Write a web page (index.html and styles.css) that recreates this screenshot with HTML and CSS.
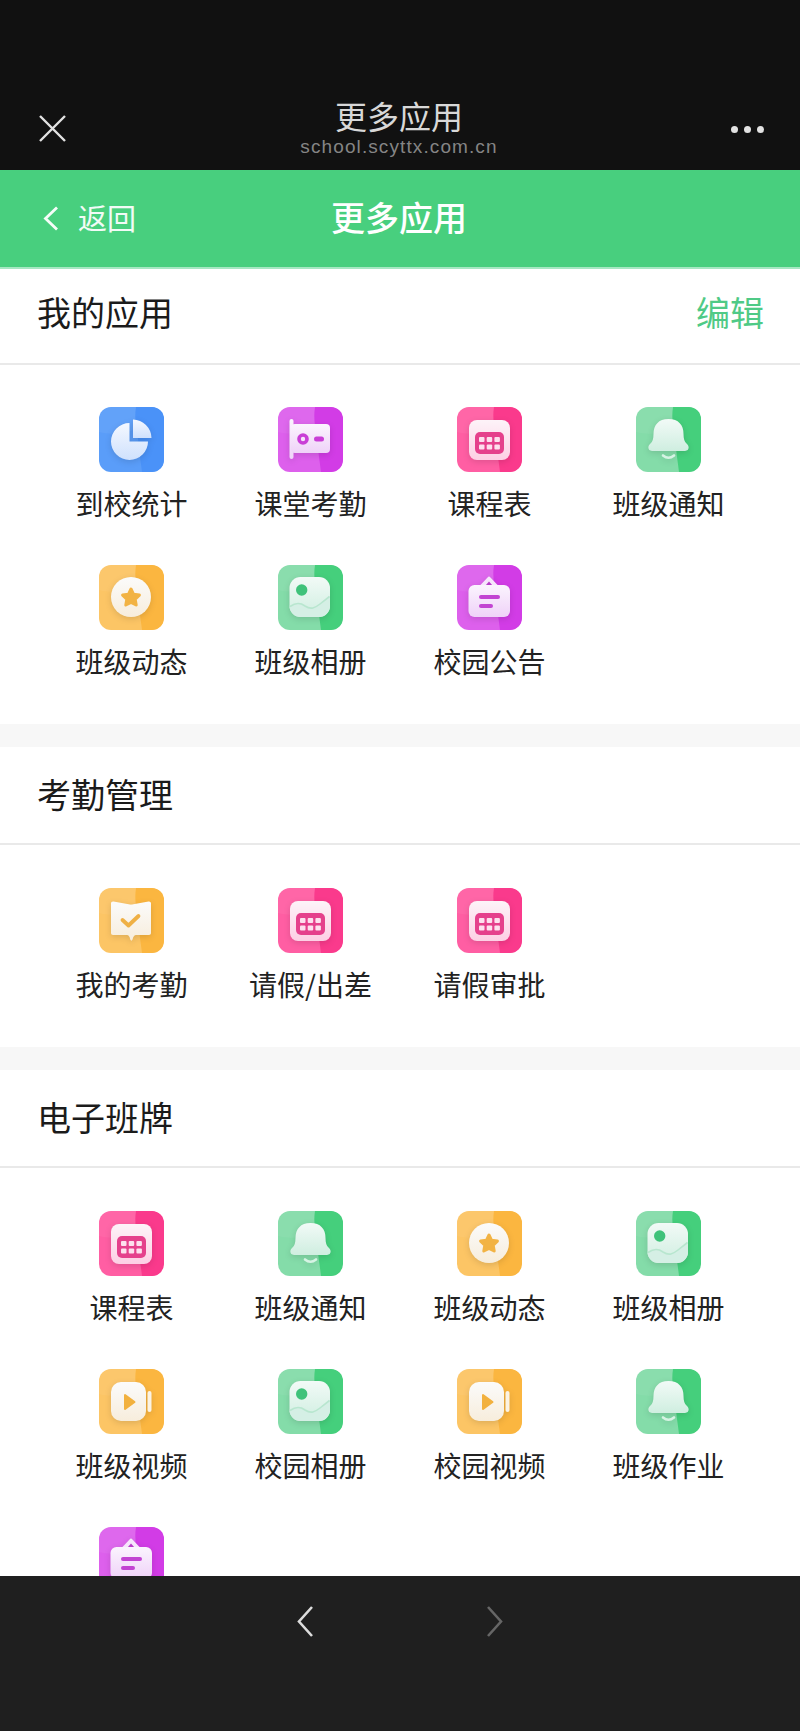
FILE: index.html
```html
<!DOCTYPE html>
<html lang="zh-CN">
<head>
    <meta charset="UTF-8">
    <meta name="viewport" content="width=device-width, initial-scale=1.0">
    <title>更多应用</title>
    <link rel="stylesheet" href="styles.css">
</head>
<body>
    <!-- shared icon parts -->
    <svg class="icon-defs" aria-hidden="true">
        <defs>
            <linearGradient id="fade-blue" x1="0" y1="0" x2="0" y2="1"><stop offset="0" stop-color="#f4f8ff"/><stop offset="1" stop-color="#cfe1fd"/></linearGradient>
            <linearGradient id="fade-purple" x1="0" y1="0" x2="0" y2="1"><stop offset="0" stop-color="#fbf4fe"/><stop offset="1" stop-color="#efd2f8"/></linearGradient>
            <linearGradient id="fade-pink" x1="0" y1="0" x2="0" y2="1"><stop offset="0" stop-color="#fdf3f8"/><stop offset="1" stop-color="#fdcfe4"/></linearGradient>
            <linearGradient id="fade-green" x1="0" y1="0" x2="0" y2="1"><stop offset="0" stop-color="#f2faf7"/><stop offset="1" stop-color="#cfeee0"/></linearGradient>
            <linearGradient id="fade-orange" x1="0" y1="0" x2="0" y2="1"><stop offset="0" stop-color="#fbfbfb"/><stop offset="1" stop-color="#f7eddc"/></linearGradient>

            <symbol id="tile" viewBox="0 0 65 65">
                <path class="tile-right" d="M37 0C35 12 38 22 39 32C40 44 42 56 43 65H53A12 12 0 0 0 65 53V12A12 12 0 0 0 53 0Z"/>
                <path class="tile-band" d="M12 0H37C36 8 36 15 37 22C25 27 11 28 0 25V12A12 12 0 0 1 12 0Z"/>
            </symbol>

            <symbol id="pie" viewBox="0 0 65 65">
                <path fill="url(#fade-blue)" d="M30.5 16A18.5 18.5 0 1 0 49 34.5H30.5Z"/>
                <path fill="url(#fade-blue)" d="M34 12.5A19 19 0 0 1 52.5 31H34Z"/>
            </symbol>
            <symbol id="card" viewBox="0 0 65 65">
                <rect x="11.5" y="12" width="4" height="40" rx="2" fill="url(#fade-purple)"/>
                <rect x="13" y="17" width="39" height="29" rx="4" fill="url(#fade-purple)"/>
                <circle cx="25" cy="32" r="4" fill="none" stroke="#c93ed6" stroke-width="3.6"/>
                <rect x="36" y="29.5" width="10" height="5" rx="2.5" fill="#c93ed6"/>
            </symbol>
            <symbol id="calendar" viewBox="0 0 65 65">
                <rect x="12" y="13" width="41" height="40" rx="8" fill="url(#fade-pink)"/>
                <rect x="18" y="25" width="29" height="22" rx="5" fill="#e5408c"/>
                <g fill="#fde0ee">
                    <rect x="22" y="30" width="5.5" height="5" rx="1"/>
                    <rect x="29.7" y="30" width="5.5" height="5" rx="1"/>
                    <rect x="37.4" y="30" width="5.5" height="5" rx="1"/>
                    <rect x="22" y="37.5" width="5.5" height="5" rx="1"/>
                    <rect x="29.7" y="37.5" width="5.5" height="5" rx="1"/>
                    <rect x="37.4" y="37.5" width="5.5" height="5" rx="1"/>
                </g>
            </symbol>
            <symbol id="bell" viewBox="0 0 65 65">
                <path fill="url(#fade-green)" d="M32.5 12C22.5 12 17.5 18 17.5 27C17.5 32 16.5 34.5 14.5 36.5C11 39.5 12 44 16 44H49C53 44 54 39.5 50.5 36.5C48.5 34.5 47.5 32 47.5 27C47.5 18 42.5 12 32.5 12Z"/>
                <path fill="none" stroke="#d6f3e4" stroke-width="2.6" stroke-linecap="round" d="M27 48.5Q32.5 53 38 48.5"/>
            </symbol>
            <symbol id="star" viewBox="0 0 65 65">
                <circle cx="32" cy="32" r="20" fill="url(#fade-orange)"/>
                <path fill="#f2b344" stroke="#f2b344" stroke-width="3" stroke-linejoin="round" d="M32 24L34.6 29.3L40.4 30.1L36.2 34.2L37.2 40L32 37.3L26.8 40L27.8 34.2L23.6 30.1L29.4 29.3Z"/>
            </symbol>
            <symbol id="photo" viewBox="0 0 65 65">
                <rect x="11.5" y="12" width="40.5" height="40" rx="11" fill="url(#fade-green)"/>
                <path fill="#d5efe5" d="M11.5 42C18 37.5 22 37.5 27 41C33 45 37 43 42 39L52 31V41A11 11 0 0 1 41 52H22.5A11 11 0 0 1 11.5 41Z"/>
                <path fill="none" stroke="#b8e6cf" stroke-width="1.6" d="M12 41.5C18 37.5 22 37.5 27 41C33 45 37 43 42 39L51.5 31.5"/>
                <circle cx="23.7" cy="25" r="5.7" fill="#3fc27a"/>
            </symbol>
            <symbol id="notice" viewBox="0 0 65 65">
                <path fill="#f6e6fb" stroke="#f6e6fb" stroke-width="2" stroke-linejoin="round" d="M32 12.5L41 22H23Z"/>
                <path fill="#b73cc8" d="M32 16.5L35.5 20.5H28.5Z"/>
                <rect x="11.5" y="20" width="41.5" height="32" rx="6" fill="url(#fade-purple)"/>
                <rect x="22" y="30" width="21" height="4" rx="2" fill="#c244d2"/>
                <rect x="22" y="39" width="14" height="4" rx="2" fill="#c244d2"/>
            </symbol>
            <symbol id="book" viewBox="0 0 65 65">
                <path fill="url(#fade-orange)" d="M14.5 13.5L31 16.5C31.7 16.7 32.3 16.7 33 16.5L49.5 13.5C51 13.3 52 14 52 15.5V45C52 46 51.2 47 50 47H37C35.5 47 34.5 48 33.5 51.5C33 53 31.8 53 31.3 51.5C30.5 48 29.5 47 28 47H14C12.8 47 12 46 12 45V15.5C12 14 13 13.3 14.5 13.5Z"/>
                <path fill="none" stroke="#efb045" stroke-width="3.8" stroke-linecap="round" stroke-linejoin="round" d="M23.5 32L29.5 37.5L39.5 28"/>
            </symbol>
            <symbol id="video" viewBox="0 0 65 65">
                <rect x="12" y="13" width="35" height="39" rx="10" fill="url(#fade-orange)"/>
                <rect x="48.5" y="22" width="4" height="21" rx="2" fill="#fbf3e4"/>
                <path fill="#f2b13e" stroke="#f2b13e" stroke-width="2" stroke-linejoin="round" d="M26 26V40L35.5 33Z"/>
            </symbol>
        </defs>
    </svg>

    <header class="wx-bar">
        <svg class="wx-close" viewBox="0 0 27 27"><path d="M1 1L26 26M26 1L1 26"/></svg>
        <div class="wx-title">
            <div class="wx-name">更多应用</div>
            <div class="wx-url">school.scyttx.com.cn</div>
        </div>
        <div class="wx-more"><i></i><i></i><i></i></div>
    </header>

    <nav class="top-nav">
        <div class="back">
            <svg class="back-arrow" viewBox="0 0 16 25"><path d="M14 1.5L2.5 12.5L14 23.5"/></svg>
            <span>返回</span>
        </div>
        <div class="page-title">更多应用</div>
    </nav>

    <main class="content">
        <section class="group">
            <div class="group-head">
                <h2>我的应用</h2>
                <span class="edit">编辑</span>
            </div>
            <div class="app-grid">
                <div class="app"><svg class="app-icon blue" viewBox="0 0 65 65"><use href="#tile"/><use class="glyph" href="#pie"/></svg><span>到校统计</span></div>
                <div class="app"><svg class="app-icon purple" viewBox="0 0 65 65"><use href="#tile"/><use class="glyph" href="#card"/></svg><span>课堂考勤</span></div>
                <div class="app"><svg class="app-icon pink" viewBox="0 0 65 65"><use href="#tile"/><use class="glyph" href="#calendar"/></svg><span>课程表</span></div>
                <div class="app"><svg class="app-icon green" viewBox="0 0 65 65"><use href="#tile"/><use class="glyph" href="#bell"/></svg><span>班级通知</span></div>
                <div class="app"><svg class="app-icon orange" viewBox="0 0 65 65"><use href="#tile"/><use class="glyph" href="#star"/></svg><span>班级动态</span></div>
                <div class="app"><svg class="app-icon green" viewBox="0 0 65 65"><use href="#tile"/><use class="glyph" href="#photo"/></svg><span>班级相册</span></div>
                <div class="app"><svg class="app-icon purple" viewBox="0 0 65 65"><use href="#tile"/><use class="glyph" href="#notice"/></svg><span>校园公告</span></div>
            </div>
        </section>

        <section class="group">
            <div class="group-head">
                <h2>考勤管理</h2>
            </div>
            <div class="app-grid">
                <div class="app"><svg class="app-icon orange" viewBox="0 0 65 65"><use href="#tile"/><use class="glyph" href="#book"/></svg><span>我的考勤</span></div>
                <div class="app"><svg class="app-icon pink" viewBox="0 0 65 65"><use href="#tile"/><use class="glyph" href="#calendar"/></svg><span>请假/出差</span></div>
                <div class="app"><svg class="app-icon pink" viewBox="0 0 65 65"><use href="#tile"/><use class="glyph" href="#calendar"/></svg><span>请假审批</span></div>
            </div>
        </section>

        <section class="group">
            <div class="group-head">
                <h2>电子班牌</h2>
            </div>
            <div class="app-grid">
                <div class="app"><svg class="app-icon pink" viewBox="0 0 65 65"><use href="#tile"/><use class="glyph" href="#calendar"/></svg><span>课程表</span></div>
                <div class="app"><svg class="app-icon green" viewBox="0 0 65 65"><use href="#tile"/><use class="glyph" href="#bell"/></svg><span>班级通知</span></div>
                <div class="app"><svg class="app-icon orange" viewBox="0 0 65 65"><use href="#tile"/><use class="glyph" href="#star"/></svg><span>班级动态</span></div>
                <div class="app"><svg class="app-icon green" viewBox="0 0 65 65"><use href="#tile"/><use class="glyph" href="#photo"/></svg><span>班级相册</span></div>
                <div class="app"><svg class="app-icon orange" viewBox="0 0 65 65"><use href="#tile"/><use class="glyph" href="#video"/></svg><span>班级视频</span></div>
                <div class="app"><svg class="app-icon green" viewBox="0 0 65 65"><use href="#tile"/><use class="glyph" href="#photo"/></svg><span>校园相册</span></div>
                <div class="app"><svg class="app-icon orange" viewBox="0 0 65 65"><use href="#tile"/><use class="glyph" href="#video"/></svg><span>校园视频</span></div>
                <div class="app"><svg class="app-icon green" viewBox="0 0 65 65"><use href="#tile"/><use class="glyph" href="#bell"/></svg><span>班级作业</span></div>
                <div class="app"><svg class="app-icon purple" viewBox="0 0 65 65"><use href="#tile"/><use class="glyph" href="#notice"/></svg></div>
            </div>
        </section>
    </main>

    <footer class="wx-toolbar">
        <svg class="tool-arrow" viewBox="0 0 16 31"><path d="M15 1L2 15.5L15 30"/></svg>
        <svg class="tool-arrow off" viewBox="0 0 16 31"><path d="M1 1L14 15.5L1 30"/></svg>
    </footer>
</body>
</html>
```

FILE: styles.css
```css
* {
    box-sizing: border-box;
}

body {
    font-family: "Noto Sans CJK SC", "Noto Sans", sans-serif;
    margin: 0;
    height: 1731px;
    display: flex;
    flex-direction: column;
    overflow: hidden;
    background-color: #fff;
}

.icon-defs {
    display: block;
    width: 0;
    height: 0;
}

/* wechat browser bar */
.wx-bar {
    height: 170px;
    flex: none;
    display: grid;
    grid-template-columns: 1fr auto 1fr;
    align-items: end;
    padding: 0 36px 12px 34px;
    background-color: #111;
}

.wx-close {
    width: 27px;
    height: 27px;
    margin: 0 0 16px 5px;
    fill: none;
    stroke: #e2e2e2;
    stroke-width: 2.4;
}

.wx-title {
    text-align: center;
}

.wx-name {
    font-family: "Liberation Sans", "Noto Sans CJK SC", sans-serif;
    font-size: 32px;
    line-height: 36px;
    color: #d8d8d8;
}

.wx-url {
    font-family: "Liberation Sans", Arial, sans-serif;
    font-size: 19px;
    line-height: 22px;
    letter-spacing: 1.1px;
    color: #858585;
}

.wx-more {
    justify-self: end;
    display: flex;
    gap: 6px;
    margin-bottom: 25px;
}

.wx-more i {
    width: 7px;
    height: 7px;
    border-radius: 50%;
    background-color: #e2e2e2;
}

/* green page header */
.top-nav {
    height: 97px;
    flex: none;
    display: grid;
    grid-template-columns: 1fr auto 1fr;
    align-items: center;
    padding: 0 45px 0 43px;
    background-color: #48cf7e;
}

.back {
    display: flex;
    align-items: center;
    gap: 19px;
    font-size: 29px;
    color: #f2fbf6;
}

.back span {
    margin-top: -4px;
}

.back-arrow {
    width: 16px;
    height: 25px;
    fill: none;
    stroke: #f6fdf9;
    stroke-width: 2.8;
}

.page-title {
    font-size: 34px;
    font-weight: 500;
    margin-top: -4px;
    color: #fff;
}

/* list of app groups */
.content {
    flex: 1;
    min-height: 0;
    overflow: hidden;
    background-color: #f7f7f7;
}

.group {
    margin-bottom: 23px;
    background-color: #fff;
}

.group-head {
    height: 98px;
    display: flex;
    align-items: center;
    justify-content: space-between;
    padding: 0 36px 4px 37px;
    border-bottom: 2px solid #e9e9e9;
}

.group:first-child .group-head {
    padding-bottom: 9px;
    border-top: 2px solid #a6e8c2;
}

.group-head h2 {
    margin: 0;
    font-size: 34px;
    font-weight: 400;
    color: #1b1b1b;
}

.edit {
    font-size: 34px;
    color: #4fca86;
}

.app-grid {
    display: grid;
    grid-template-columns: repeat(4, 179px);
    row-gap: 42px;
    padding: 43px 42px 43px;
}

.group:first-child .app-grid {
    padding-top: 42px;
}

.app {
    display: flex;
    flex-direction: column;
    align-items: center;
    font-size: 28px;
    line-height: 40px;
    color: #222;
    gap: 11px;
}

.app-icon {
    width: 65px;
    height: 65px;
    border-radius: 12px;
}

.glyph {
    filter: drop-shadow(0 2px 3px rgba(0, 0, 0, 0.12));
}

.app-icon.blue { background-color: #5a9df9; --tile-dark: #4a92f8; }
.app-icon.purple { background-color: #dd60ec; --tile-dark: #d23ce6; }
.app-icon.pink { background-color: #ff5ea3; --tile-dark: #fa3a8c; }
.app-icon.green { background-color: #84dca9; --tile-dark: #45cf7c; }
.app-icon.orange { background-color: #fcc565; --tile-dark: #fbb640; }

.tile-right {
    fill: var(--tile-dark);
}

.tile-band {
    fill: #fff;
    opacity: 0.05;
}

/* wechat bottom toolbar */
.wx-toolbar {
    height: 155px;
    flex: none;
    display: flex;
    justify-content: center;
    align-items: flex-start;
    gap: 174px;
    padding-top: 30px;
    background-color: #1f1f1f;
}

.tool-arrow {
    width: 16px;
    height: 31px;
    fill: none;
    stroke: #dcdcdc;
    stroke-width: 2.6;
}

.tool-arrow.off {
    stroke: #666;
}
```
